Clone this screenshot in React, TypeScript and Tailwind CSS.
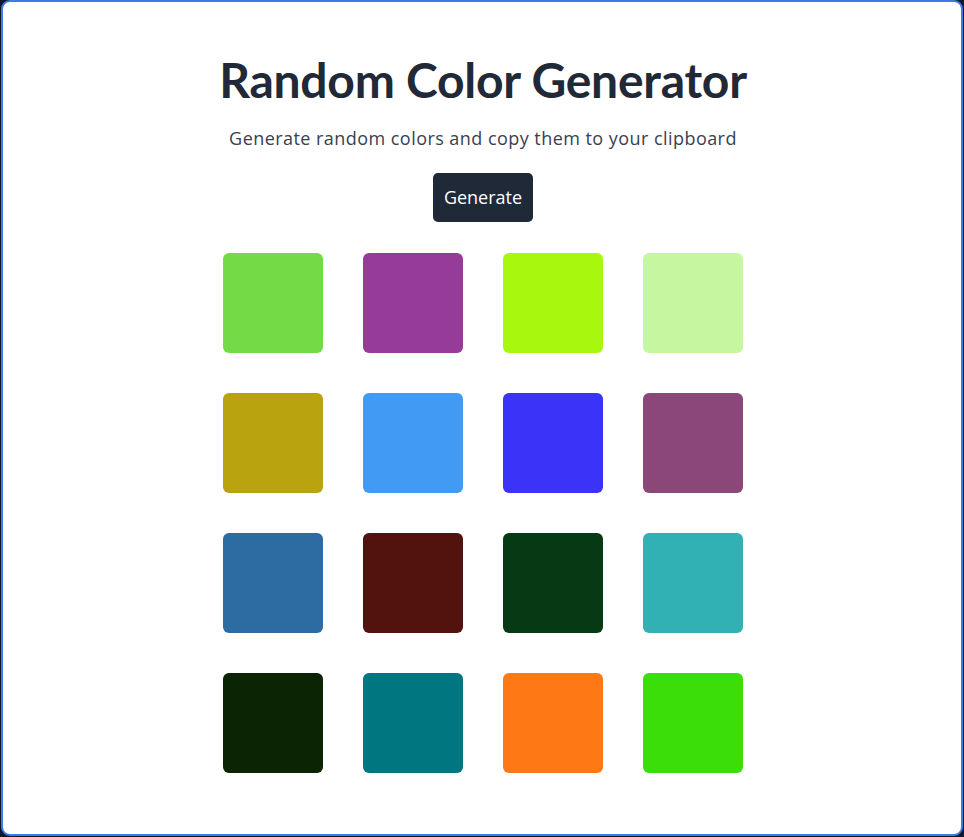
import React from "react";

const colors = [
  "#74db46", "#963c98", "#a8f70f", "#c6f7a0",
  "#b9a30e", "#419bf5", "#3b33f7", "#8a4778",
  "#2d6ca2", "#52120e", "#063a14", "#31b1b4",
  "#0a2404", "#007680", "#fe7916", "#3bde09",
];

export default function App() {
  return (
    <div className="w-[964px] h-[837px] bg-[#0f172a] pl-[1px] pb-[1px]">
      <div
        className="h-full w-[962px] rounded-[9px] border-2 border-[#3b7de8] bg-white flex flex-col items-center pt-[54px] pl-[2px]"
        style={{ fontFamily: '"Open Sans", "Noto Sans", sans-serif' }}
      >
        <h1
          className="text-[48px] leading-[48px] font-bold tracking-[-0.25px] text-[#1f2937]"
          style={{ fontFamily: '"Lato", "Open Sans", sans-serif' }}
        >
          Random Color Generator
        </h1>
        <p className="mt-[20px] text-[18px] leading-[28px] tracking-[0.45px] text-[#374151]">
          Generate random colors and copy them to your clipboard
        </p>
        <button className="mt-[21px] h-[49px] w-[100px] rounded-[5px] bg-[#1f2937] text-white text-[18px]">
          Generate
        </button>
        <div className="mt-[31px] grid grid-cols-4 gap-[40px]">
          {colors.map((c) => (
            <div key={c} className="w-[100px] h-[100px] rounded-[6px]" style={{ backgroundColor: c }} />
          ))}
        </div>
      </div>
    </div>
  );
}
